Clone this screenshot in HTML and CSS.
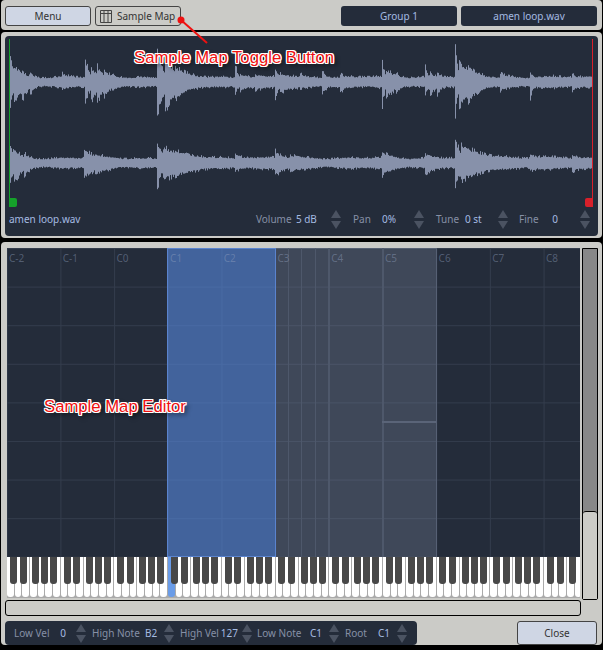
FILE: index.html
```html
<!DOCTYPE html>
<html lang="en">
<head>
  <meta charset="UTF-8">
  <title>Sample Map Editor</title>
  <link rel="stylesheet" href="styles.css">
</head>
<body>
<div class="window">
  <!-- top bar -->
  <div class="panel toolbar">
    <button class="btn btn-menu">Menu</button>
    <button class="btn btn-map">
      <svg width="12" height="13" viewBox="0 0 12 13" class="map-icon">
        <path d="M.5.5h11v12H.5zM.5 3.5h11M4 .5v12M8 .5v12" fill="none" stroke="#444" stroke-width="1"/>
      </svg>
      Sample Map
    </button>
    <div class="spacer"></div>
    <div class="name-box name-group">Group 1</div>
    <div class="name-box name-file">amen loop.wav</div>
  </div>

  <!-- waveform -->
  <div class="panel wave-panel">
    <div class="wave-view">
      <svg class="wave-svg" width="593" height="172" viewBox="0 0 593 172">
        <path id="wavePath" fill="none" stroke="#8791aa" stroke-width="1"/>
        <rect x="4" y="3" width="1" height="168" fill="#15a12a"/>
        <path d="M4 162h6a2 2 0 0 1 2 2v5a2 2 0 0 1-2 2H4z" fill="#15a12a"/>
        <rect x="587" y="3" width="1" height="168" fill="#d8202a"/>
        <path d="M588 162h-6a2 2 0 0 0-2 2v5a2 2 0 0 0 2 2h6z" fill="#d8202a"/>
      </svg>
      <div class="wave-info">
        <span class="file-name">amen loop.wav</span>
        <div class="field field-wide"><span class="lbl">Volume</span><span class="val">5 dB</span><span class="stepper"></span></div>
        <div class="field"><span class="lbl">Pan</span><span class="val">0%</span><span class="stepper"></span></div>
        <div class="field"><span class="lbl">Tune</span><span class="val">0 st</span><span class="stepper"></span></div>
        <div class="field"><span class="lbl">Fine</span><span class="val">0</span><span class="stepper"></span></div>
      </div>
    </div>
  </div>

  <!-- sample map -->
  <div class="panel map-panel">
    <div class="map-row">
      <div class="map-left">
        <div class="map-grid" id="mapGrid"></div>
        <div class="keyboard" id="keyboard"></div>
      </div>
      <div class="v-scroll"><div class="v-thumb"></div></div>
    </div>
    <div class="h-scroll"></div>
    <div class="bottom-row">
      <div class="bottom-fields">
        <div class="field f-lowvel"><span class="lbl">Low Vel</span><span class="val">0</span><span class="stepper"></span></div>
        <div class="field f-highnote"><span class="lbl">High Note</span><span class="val">B2</span><span class="stepper"></span></div>
        <div class="field f-highvel"><span class="lbl">High Vel</span><span class="val">127</span><span class="stepper"></span></div>
        <div class="field f-lownote"><span class="lbl">Low Note</span><span class="val">C1</span><span class="stepper"></span></div>
        <div class="field f-root"><span class="lbl">Root</span><span class="val">C1</span><span class="stepper"></span></div>
      </div>
      <button class="btn btn-close">Close</button>
    </div>
  </div>

  <!-- annotations pasted over the screenshot -->
  <svg class="arrow" width="40" height="40" viewBox="0 0 40 40">
    <circle cx="5" cy="5" r="3.5" fill="#ee1111"/>
    <path d="M5 5L31 28" stroke="#ee1111" stroke-width="2"/>
  </svg>
  <div class="note note-toggle">Sample Map Toggle Button</div>
  <div class="note note-editor">Sample Map Editor</div>
</div>
<script src="script.js"></script>
</body>
</html>
```

FILE: styles.css
```css
* {
  box-sizing: border-box;
}
body {
  margin: 0;
  background-color: #000;
  font-family: "Noto Sans", sans-serif;
  font-size: 10px;
  color: #333;
}
.window {
  position: relative;
  width: 603px;
  height: 650px;
  padding: 0 1px 1px 1px;
  overflow: hidden;
}
.panel {
  background-color: #cbcbc7;
  border-radius: 4px;
}
.toolbar {
  display: flex;
  height: 30px;
  padding: 6px 5px 0 4px;
  margin-bottom: 2px;
}
.btn {
  height: 20px;
  padding: 0;
  font-family: inherit;
  font-size: 10px;
  color: #333;
  border: 1px solid #444;
  border-radius: 3px;
  background-color: #cfd6e4;
}
.btn-menu {
  width: 86px;
}
.btn-map {
  display: flex;
  align-items: center;
  width: 86px;
  margin-left: 4px;
  padding-left: 4px;
  background-color: #cbcbc7;
}
.map-icon {
  margin-right: 5px;
}
.spacer {
  flex: 1;
}
.name-box {
  height: 20px;
  line-height: 20px;
  text-align: center;
  color: #a4bbe2;
  background-color: #242c3a;
  border-radius: 3px;
}
.name-group {
  width: 116px;
  margin-right: 4px;
}
.name-file {
  width: 136px;
}
.wave-panel {
  height: 206px;
  padding: 4px 4px 2px 4px;
  margin-bottom: 4px;
}
.wave-view {
  height: 200px;
  background-color: #242c3a;
  border-radius: 4px;
}
.wave-svg {
  display: block;
}
.wave-info {
  display: flex;
  align-items: center;
  height: 22px;
  padding: 0 8px 0 4px;
}
.file-name {
  margin-right: auto;
  color: #a4bbe2;
}
.field {
  display: flex;
  align-items: center;
  width: 83px;
  padding-left: 12px;
}
.field-wide {
  width: 85px;
  padding-left: 0;
}
.lbl {
  flex: 1;
  color: #8690a6;
  white-space: nowrap;
}
.val {
  width: 30px;
  margin-right: 10px;
  text-align: center;
  color: #a4bbe2;
  white-space: nowrap;
}
.stepper {
  position: relative;
  width: 10px;
  height: 19px;
}
.stepper::before,
.stepper::after {
  content: "";
  position: absolute;
  left: 0;
  border-left: 5px solid transparent;
  border-right: 5px solid transparent;
}
.stepper::before {
  top: 0;
  border-bottom: 8px solid #4b5362;
}
.stepper::after {
  bottom: 0;
  border-top: 8px solid #4b5362;
}
.map-panel {
  height: 403px;
  padding: 6px 4px 0 4px;
}
.map-row {
  display: flex;
  height: 352px;
}
.map-left {
  width: 575px;
  padding: 0 0 0 2px;
}
.map-grid {
  position: relative;
  height: 309px;
  overflow: hidden;
  background-color: #242c3a;
  background-image:
    linear-gradient(#333c4c 1px, transparent 1px),
    linear-gradient(90deg, #333c4c 1px, transparent 1px);
  background-size: 53.7px 38.6px;
  background-position: 0 0, -0.3px 0;
}
.note-label {
  position: absolute;
  top: 3px;
  z-index: 2;
  color: rgba(150, 165, 195, 0.42);
}
.zone {
  position: absolute;
  top: 0;
  bottom: 0;
  background-color: rgba(144, 156, 182, 0.25);
  border-top: 1px solid #566074;
  border-left: 1px solid #566074;
  border-right: 1px solid #566074;
}
.zone-active {
  background-color: rgba(86, 136, 221, 0.6);
  border: 1px solid #5a83ce;
}
.zone-bar {
  position: absolute;
  top: 0;
  bottom: 0;
  width: 1px;
  background-color: #4e586b;
}
.zone-line {
  position: absolute;
  left: 375px;
  top: 173px;
  width: 54px;
  height: 2px;
  background-color: #5a6478;
}
.keyboard {
  position: relative;
  height: 41px;
  overflow: hidden;
  background-color: #aaa;
}
.white-key {
  position: absolute;
  top: 0;
  height: 40px;
  background-color: #fff;
  border-radius: 0 0 3px 3px;
}
.white-key.on {
  background-color: #6a9ce8;
}
.black-key {
  position: absolute;
  top: 0;
  width: 7px;
  height: 27px;
  background-color: #484848;
  border-radius: 0 0 3px 3px;
}
.v-scroll {
  width: 16px;
  margin-left: 2px;
  background-color: #888;
  border: 1px solid #000;
  border-radius: 0 0 2px 2px;
  padding-top: 262px;
}
.v-thumb {
  height: 88px;
  background-color: #cbcbc7;
  border-top: 1px solid #000;
  border-radius: 3px 3px 0 0;
}
.h-scroll {
  width: 576px;
  height: 16px;
  border: 1px solid #000;
  border-radius: 3px;
}
.bottom-row {
  display: flex;
  justify-content: space-between;
  margin-top: 5px;
  padding-right: 1px;
}
.bottom-fields {
  display: flex;
  align-items: center;
  gap: 6px;
  width: 412px;
  height: 24px;
  padding-left: 9px;
  background-color: #242c3a;
  border-radius: 4px;
}
.bottom-fields .field {
  padding-left: 0;
}
.bottom-fields .val {
  width: 22px;
  margin-right: 2px;
}
.f-lowvel {
  width: 72px;
}
.f-highnote {
  width: 82px;
}
.f-highvel {
  width: 71px;
}
.f-lownote {
  width: 82px;
}
.f-root {
  width: 62px;
}
.btn-close {
  width: 80px;
  height: 24px;
}
.arrow {
  position: absolute;
  left: 176px;
  top: 15px;
}
.note {
  position: absolute;
  font-family: "Liberation Sans", sans-serif;
  font-size: 16.7px;
  color: #ee1111;
  text-shadow:
    1px 0 0 #fff, -1px 0 0 #fff, 0 1px 0 #fff, 0 -1px 0 #fff,
    1px 1px 0 #fff, -1px -1px 0 #fff, 1px -1px 0 #fff, -1px 1px 0 #fff,
    3px 3px 4px rgba(0, 0, 0, 0.7);
  white-space: nowrap;
}
.note-toggle {
  left: 134px;
  top: 48px;
}
.note-editor {
  left: 44px;
  top: 397px;
}
```

FILE: script.js
```js
// small seeded random so the waveform stays the same on each load
let seed = 12345;
const rnd = () => {
  seed = (seed * 16807) % 2147483647;
  return seed / 2147483647;
};

// [x, peak up, peak down, decay in px]
const hitsTop = [
  [9, 26, 26, 4], [14, 14, 22, 7], [22, 8, 16, 4], [30, 7, 12, 3], [62, 4, 3, 5], [85, 24, 20, 3],
  [91, 12, 18, 4], [97, 12, 20, 4], [104, 8, 12, 5], [112, 4, 6, 5], [157, 36, 40, 5],
  [165, 26, 36, 8], [175, 12, 14, 10], [235, 18, 12, 2], [240, 6, 8, 6], [255, 4, 6, 4],
  [275, 12, 18, 2], [280, 5, 8, 8], [300, 6, 3, 3], [322, 8, 10, 4], [340, 4, 8, 3],
  [382, 20, 26, 1.5], [386, 8, 12, 8], [396, 5, 8, 4], [425, 12, 12, 2], [430, 7, 14, 3],
  [437, 7, 12, 3], [455, 41, 38, 2], [459, 22, 30, 7], [468, 12, 20, 8], [478, 6, 8, 6],
  [500, 5, 5, 6], [530, 8, 14, 2], [572, 4, 8, 3]
];
const hitsBottom = [
  [9, 20, 22, 4], [14, 10, 18, 6], [24, 6, 12, 4], [84, 12, 14, 7], [95, 4, 8, 8], [157, 24, 26, 4],
  [163, 14, 16, 20], [235, 6, 5, 8], [275, 8, 10, 6], [290, 4, 5, 8], [382, 6, 8, 8],
  [425, 5, 7, 8], [455, 26, 24, 4], [461, 14, 14, 22], [530, 6, 5, 6], [572, 3, 5, 6]
];

const channel = (center, hits, base) => {
  let d = '';
  for (let x = 9; x < 592; x++) {
    // slow swell so the quiet band is not a flat strip
    const band = base * (1 + 0.22 * Math.sin(x / 9) * Math.sin(x / 23));
    let up = band;
    let down = band;
    hits.forEach(h => {
      const dist = x - h[0];
      if (dist >= 0) {
        const fall = Math.exp(-dist / h[3]);
        up = Math.max(up, band + h[1] * fall);
        down = Math.max(down, band + h[2] * fall);
      }
    });
    const a = up * (rnd() < 0.15 ? 0.95 : 0.65 + rnd() * 0.2);
    const b = down * (rnd() < 0.15 ? 0.95 : 0.65 + rnd() * 0.2);
    d += 'M' + (x - 4.5) + ' ' + (center - a).toFixed(1) + 'V' + (center + b).toFixed(1);
  }
  return d;
};
document.getElementById('wavePath').setAttribute('d',
  channel(46, hitsTop, 6.5) + channel(127, hitsBottom, 6.5));

// sample map: note labels and zones
const grid = document.getElementById('mapGrid');
const names = ['C-2', 'C-1', 'C0', 'C1', 'C2', 'C3', 'C4', 'C5', 'C6', 'C7', 'C8'];
names.forEach((name, i) => {
  const label = document.createElement('div');
  label.className = 'note-label';
  label.style.left = (2 + i * 53.7) + 'px';
  label.textContent = name;
  grid.appendChild(label);
});

const addZone = (cls, left, width) => {
  const zone = document.createElement('div');
  zone.className = cls;
  zone.style.left = left + 'px';
  zone.style.width = width + 'px';
  grid.appendChild(zone);
};
addZone('zone', 268, 162);
addZone('zone zone-active', 160, 109);
[281, 294, 308].forEach(x => addZone('zone-bar', x, 1));
[321, 375].forEach(x => addZone('zone-bar', x, 2));

const line = document.createElement('div');
line.className = 'zone-line';
grid.appendChild(line);

// keyboard: 75 white keys, 10 octaves and a bit
const keyboard = document.getElementById('keyboard');
const octave = 53.7;
const whiteW = octave / 7;
for (let i = 0; i < 75; i++) {
  const key = document.createElement('div');
  key.className = i === 21 ? 'white-key on' : 'white-key';
  key.style.left = Math.round(i * whiteW) + 'px';
  key.style.width = (Math.round((i + 1) * whiteW) - Math.round(i * whiteW) - 1) + 'px';
  keyboard.appendChild(key);
}
const blackCenters = [6.3, 16, 28.5, 37.5, 46.5];
for (let o = 0; o < 11; o++) {
  blackCenters.forEach(c => {
    const x = Math.round(o * octave + c - 3.5);
    if (x < 567) {
      const key = document.createElement('div');
      key.className = 'black-key';
      key.style.left = x + 'px';
      keyboard.appendChild(key);
    }
  });
}
```
